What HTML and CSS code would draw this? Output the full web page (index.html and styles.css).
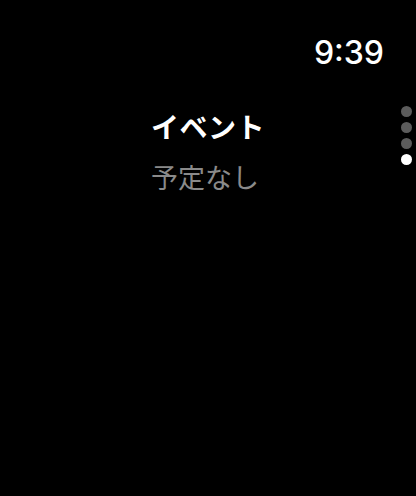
FILE: index.html
```html
<!DOCTYPE html>
<html lang="ja">
<head>
<meta charset="utf-8">
<link rel="stylesheet" href="styles.css">
</head>
<body>
<div class="screen">
  <div class="status">
    <span class="time">9:39</span>
  </div>
  <div class="content">
    <div class="title">イベント</div>
    <div class="empty">予定なし</div>
  </div>
  <div class="pager">
    <span class="dot"></span>
    <span class="dot"></span>
    <span class="dot"></span>
    <span class="dot active"></span>
  </div>
</div>
</body>
</html>
```
FILE: styles.css
```css
html, body {
  margin: 0;
  padding: 0;
  background: #000;
}
.screen {
  position: relative;
  width: 416px;
  height: 496px;
  background: #000;
  display: flex;
  flex-direction: column;
  font-family: Inter, "Noto Sans CJK JP", sans-serif;
}
.status {
  display: flex;
  justify-content: flex-end;
  padding: 33px 32px 0 0;
}
.time {
  color: #fff;
  font-family: Inter, sans-serif;
  font-size: 32px;
  line-height: 40px;
  font-weight: 500;
}
.content {
  display: flex;
  flex-direction: column;
  align-items: center;
  padding-top: 35px;
}
.title {
  color: #fff;
  font-family: "Noto Sans CJK JP", sans-serif;
  font-weight: 700;
  font-size: 28px;
  line-height: 36px;
  letter-spacing: 0.5px;
}
.empty {
  color: #8a8a8a;
  font-family: "Noto Sans CJK JP", sans-serif;
  font-weight: 400;
  font-size: 27px;
  line-height: 36px;
  margin-top: 15px;
  padding-right: 6px;
}
.pager {
  position: absolute;
  right: 4px;
  top: 106px;
  display: flex;
  flex-direction: column;
  gap: 5px;
}
.dot {
  width: 11px;
  height: 11px;
  border-radius: 50%;
  background: #5c5c5c;
}
.dot.active {
  background: #fff;
}
```
